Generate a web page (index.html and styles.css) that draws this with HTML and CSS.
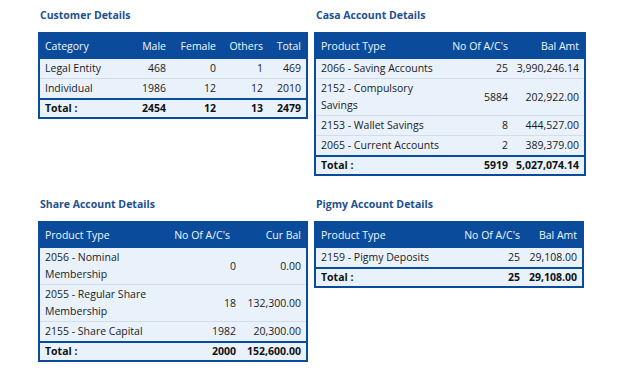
FILE: index.html
```html
<!DOCTYPE html>
<html>
<head>
<meta charset="utf-8">
<link rel="stylesheet" href="styles.css">
</head>
<body>
<div class="page">
  <section class="panel">
    <h2 class="title">Customer Details</h2>
    <table class="grid cust">
      <colgroup><col class="c-cat"><col class="c-male"><col class="c-fem"><col class="c-oth"><col class="c-tot"></colgroup>
      <thead><tr><th>Category</th><th class="num">Male</th><th class="num">Female</th><th class="num">Others</th><th class="num">Total</th></tr></thead>
      <tbody>
        <tr><td>Legal Entity</td><td class="num">468</td><td class="num">0</td><td class="num">1</td><td class="num">469</td></tr>
        <tr><td>Individual</td><td class="num">1986</td><td class="num">12</td><td class="num">12</td><td class="num">2010</td></tr>
      </tbody>
      <tfoot><tr><td>Total :</td><td class="num">2454</td><td class="num">12</td><td class="num">13</td><td class="num">2479</td></tr></tfoot>
    </table>
  </section>

  <section class="panel">
    <h2 class="title">Casa Account Details</h2>
    <table class="grid casa">
      <colgroup><col class="c-prod"><col class="c-no"><col class="c-bal"></colgroup>
      <thead><tr><th>Product Type</th><th class="num">No Of A/C's</th><th class="num">Bal Amt</th></tr></thead>
      <tbody>
        <tr><td>2066 - Saving Accounts</td><td class="num">25</td><td class="num">3,990,246.14</td></tr>
        <tr><td>2152 - Compulsory Savings</td><td class="num">5884</td><td class="num">202,922.00</td></tr>
        <tr><td>2153 - Wallet Savings</td><td class="num">8</td><td class="num">444,527.00</td></tr>
        <tr><td>2065 - Current Accounts</td><td class="num">2</td><td class="num">389,379.00</td></tr>
      </tbody>
      <tfoot><tr><td>Total :</td><td class="num">5919</td><td class="num">5,027,074.14</td></tr></tfoot>
    </table>
  </section>

  <section class="panel">
    <h2 class="title">Share Account Details</h2>
    <table class="grid share">
      <colgroup><col class="c-prod"><col class="c-no"><col class="c-bal"></colgroup>
      <thead><tr><th>Product Type</th><th class="num num-inset">No Of A/C's</th><th class="num">Cur Bal</th></tr></thead>
      <tbody>
        <tr><td>2056 - Nominal Membership</td><td class="num">0</td><td class="num">0.00</td></tr>
        <tr><td>2055 - Regular Share Membership</td><td class="num">18</td><td class="num">132,300.00</td></tr>
        <tr><td>2155 - Share Capital</td><td class="num">1982</td><td class="num">20,300.00</td></tr>
      </tbody>
      <tfoot><tr><td>Total :</td><td class="num">2000</td><td class="num">152,600.00</td></tr></tfoot>
    </table>
  </section>

  <section class="panel">
    <h2 class="title">Pigmy Account Details</h2>
    <table class="grid pigmy">
      <colgroup><col class="c-prod"><col class="c-no"><col class="c-bal"></colgroup>
      <thead><tr><th>Product Type</th><th class="num">No Of A/C's</th><th class="num">Bal Amt</th></tr></thead>
      <tbody>
        <tr><td>2159 - Pigmy Deposits</td><td class="num">25</td><td class="num">29,108.00</td></tr>
      </tbody>
      <tfoot><tr><td>Total :</td><td class="num">25</td><td class="num">29,108.00</td></tr></tfoot>
    </table>
  </section>
</div>
</body>
</html>
```

FILE: styles.css
```css
html, body {
  margin: 0;
  padding: 0;
  background: #ffffff;
}

body {
  font-family: "Open Sans", "Noto Sans", sans-serif;
  font-size: 10.5px;
  color: #1b1b1b;
}

.page {
  display: grid;
  grid-template-columns: 270px 272px;
  column-gap: 6px;
  row-gap: 20px;
  align-items: start;
  padding: 7px 0 0 38px;
}

.title {
  margin: 0 0 9px 0;
  padding-left: 2px;
  font-size: 10.5px;
  line-height: 16px;
  font-weight: 700;
  color: #1d4f91;
}

.grid {
  border-collapse: separate;
  border-spacing: 0;
  border: 2px solid #0a4c9b;
  table-layout: fixed;
  background: #e9f1fb;
}

.grid th,
.grid td {
  padding: 1px 5px;
  line-height: 17px;
  text-align: left;
  vertical-align: middle;
}

.grid th {
  background: #0a4c9b;
  color: #f2f6fc;
  font-weight: 400;
  padding-top: 4px;
  padding-bottom: 4px;
}

.grid tbody td {
  border-bottom: 1px solid #d3dde9;
}

.grid tbody tr:last-child td {
  border-bottom: none;
}

.grid tfoot td {
  border-top: 2px solid #0a4c9b;
  font-weight: 700;
  padding-top: 0;
  padding-bottom: 0;
  color: #111;
}

.grid .num {
  text-align: right;
  white-space: nowrap;
  padding-left: 0;
}

.grid .num-inset {
  padding-right: 11px;
}

/* Customer */
.cust { width: 270px; }
.cust .c-cat { width: 91px; }
.cust .c-male { width: 40px; }
.cust .c-fem { width: 50px; }
.cust .c-oth { width: 47px; }
.cust .c-tot { width: 38px; }

/* Casa */
.casa { width: 272px; }
.casa .c-prod { width: 129px; }
.casa .c-no { width: 68px; }
.casa .c-bal { width: 71px; }

/* Share */
.share { width: 270px; }
.share .c-prod { width: 120px; }
.share .c-no { width: 81px; }
.share .c-bal { width: 65px; }

/* Pigmy */
.pigmy { width: 270px; }
.pigmy .c-prod { width: 139px; }
.pigmy .c-no { width: 70px; }
.pigmy .c-bal { width: 57px; }
```
